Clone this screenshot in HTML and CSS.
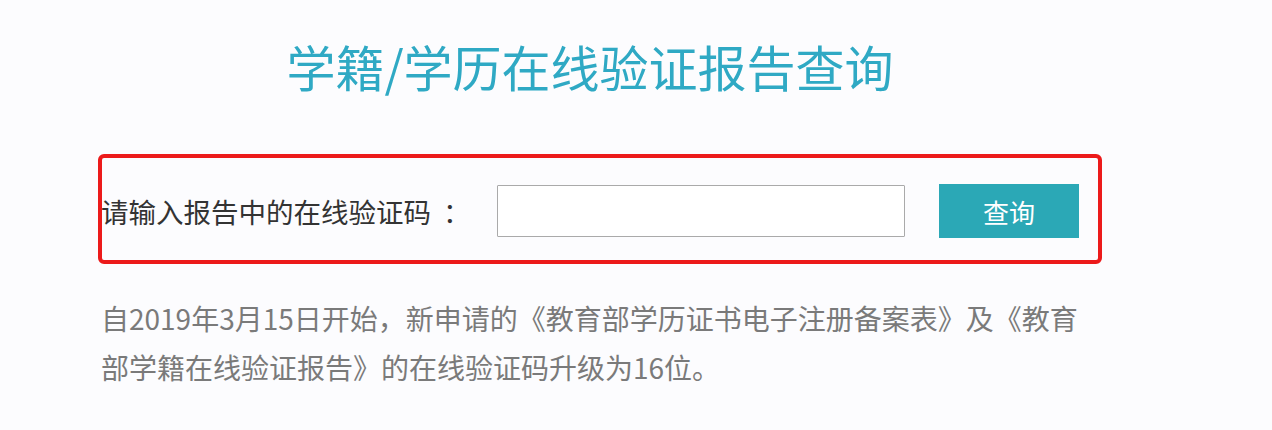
FILE: index.html
```html
<!DOCTYPE html>
<html lang="zh-CN">
<head>
<meta charset="utf-8">
<title>学籍/学历在线验证报告查询</title>
<link rel="stylesheet" href="styles.css">
</head>
<body>
<div class="page">
  <h1 class="title">学籍/学历在线验证报告查询</h1>
  <div class="query-box">
    <label class="query-label" for="code">请输入报告中的在线验证码<span class="colon">：</span></label>
    <input class="query-input" id="code" type="text">
    <button class="query-btn" type="button">查询</button>
  </div>
  <p class="notice">自2019年3月15日开始，新申请的《教育部学历证书电子注册备案表》及《教育<br>部学籍在线验证报告》的在线验证码升级为16位。</p>
</div>
</body>
</html>
```

FILE: styles.css
```css
html, body {
  margin: 0;
  padding: 0;
  background: #fcfcfe;
}

body {
  font-family: "Noto Sans CJK SC", "Microsoft YaHei", "Noto Sans", sans-serif;
}

.page {
  width: 1004px;
  margin-left: 98px;
}

.title {
  margin: 0;
  padding: 35px 20px 0 0;
  font-size: 49px;
  line-height: 62px;
  font-weight: 400;
  color: #2fa9c4;
  text-align: center;
}

.query-box {
  margin-top: 57px;
  height: 98px;
  border: 4px solid #ec1a1a;
  border-radius: 6px;
  display: flex;
  align-items: center;
  padding: 4px 18px 0 0;
}

.query-label {
  width: 396px;
  margin-left: -1px;
  font-size: 27.5px;
  color: #333;
  white-space: nowrap;
}

.colon {
  margin-left: 12px;
}

.query-input {
  width: 408px;
  height: 52px;
  box-sizing: border-box;
  border: 1px solid #aaa;
  border-radius: 1px;
  background: #fff;
  margin: 0;
  padding: 0 10px;
  font-size: 20px;
}

.query-btn {
  width: 140px;
  height: 54px;
  margin-left: 34px;
  border: none;
  background: #2ba8b6;
  color: #fff;
  font-family: "Noto Sans CJK SC", "Microsoft YaHei", sans-serif;
  font-size: 26px;
  padding: 0;
}

.notice {
  margin: 30px 0 0 3px;
  font-size: 28px;
  line-height: 49px;
  color: #7a7a7a;
  white-space: nowrap;
}
```
